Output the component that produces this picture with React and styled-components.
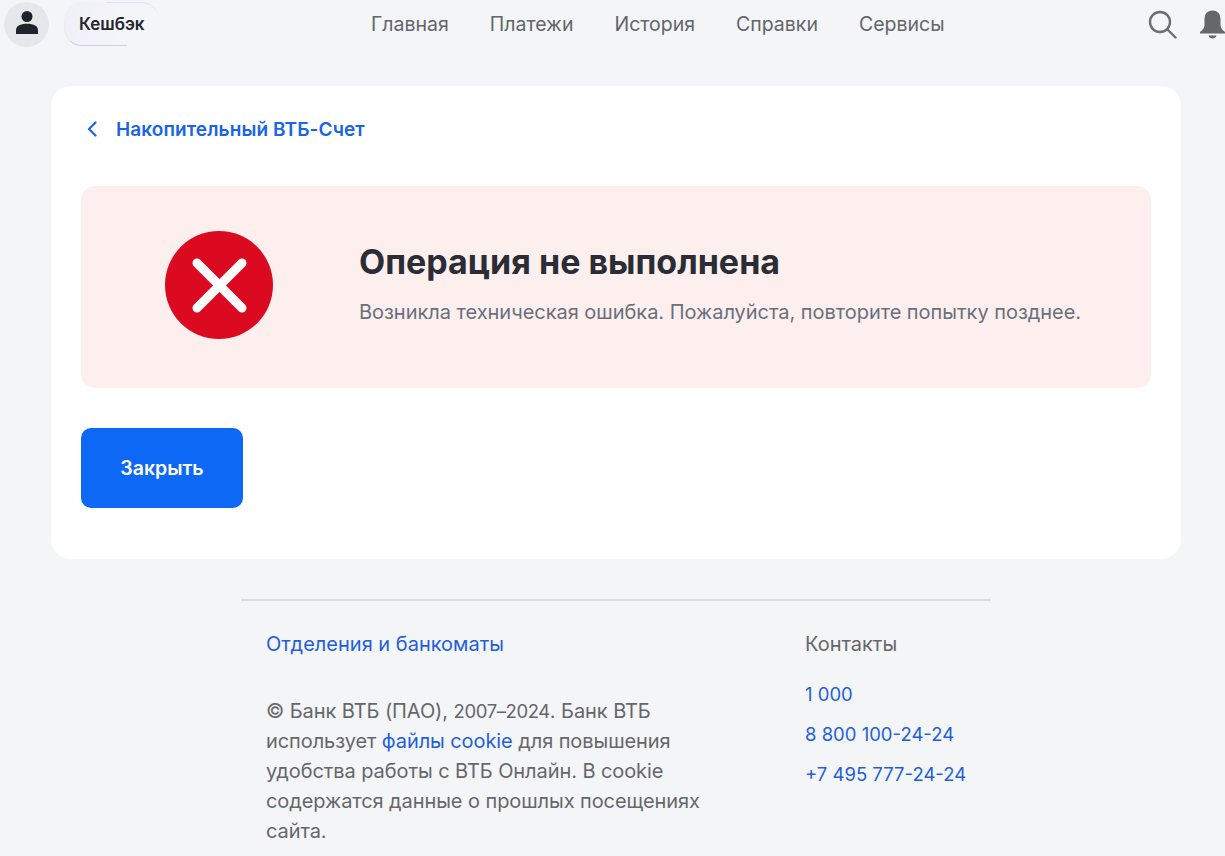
import React from 'react';
import styled, { createGlobalStyle } from 'styled-components';

const GlobalStyle = createGlobalStyle`
    html, body {
        margin: 0;
        padding: 0;
        height: 856px;
        overflow: hidden;
        background: #f4f5f7;
        font-family: "Inter", "Noto Sans", sans-serif;
    }
    * { box-sizing: border-box; }
`;

const Header = styled.header`
    height: 86px;
    padding: 2px 0 38px 4px;
    display: flex;
    align-items: flex-start;
`;

const Avatar = styled.div`
    width: 45px;
    height: 45px;
    padding-bottom: 4px;
    border-radius: 50%;
    background: #e6e7ea;
    display: flex;
    align-items: center;
    justify-content: center;
`;

const Cashback = styled.div`
    position: relative;
    margin-left: 15px;
    width: 95px;
    height: 44px;
    border-radius: 18px;
    display: flex;
    align-items: center;
    padding-left: 15px;
    font-size: 17px;
    font-weight: 600;
    color: #22262e;
    background: linear-gradient(100deg, #f0eff8 0%, #f4f5f8 60%, #f4f5f7 100%);

    &::before {
        content: '';
        position: absolute;
        left: 0;
        bottom: 0;
        width: 62px;
        height: 22px;
        border-bottom-left-radius: 18px;
        border-bottom: 1px solid #d6ccf2;
        border-left: 1px solid #ece9f7;
    }

    &::after {
        content: '';
        position: absolute;
        right: 0;
        top: 0;
        width: 52px;
        height: 18px;
        border-top-right-radius: 18px;
        border-top: 1px solid #e4def6;
    }
`;

const Nav = styled.nav`
    margin-left: 212px;
    height: 44px;
    display: flex;
    align-items: center;
    gap: 41px;
`;

const NavItem = styled.a`
    font-size: 19.5px;
    color: #62656b;
`;

const Tools = styled.div`
    margin-left: auto;
    display: flex;
    align-items: center;
    gap: 23px;
    height: 44px;
`;

const Card = styled.main`
    margin: 0 44px 0 51px;
    height: 473px;
    padding: 30px;
    background: #fff;
    border-radius: 20px;
`;

const Back = styled.a`
    height: 26px;
    display: flex;
    align-items: center;
    padding-left: 6px;
    gap: 18px;
    font-size: 19px;
    font-weight: 600;
    letter-spacing: 0.1px;
    color: #1a64e5;
`;

const ErrorPanel = styled.section`
    margin-top: 44px;
    height: 202px;
    border-radius: 14px;
    background: #feefef;
    display: flex;
    align-items: center;
    padding-left: 84px;
`;

const ErrorIcon = styled.div`
    width: 108px;
    height: 108px;
    border-radius: 50%;
    background: #dc0a20;
    display: flex;
    align-items: center;
    justify-content: center;
    flex: none;
    margin-top: -5px;
`;

const ErrorBody = styled.div`
    margin-left: 86px;
    margin-top: -8px;
`;

const Title = styled.h1`
    margin: 0;
    font-size: 34px;
    line-height: 40px;
    font-weight: 700;
    color: #2a2d35;
`;

const Message = styled.p`
    margin: 17px 0 0;
    font-size: 20px;
    line-height: 26px;
    letter-spacing: -0.03px;
    color: #69707d;
`;

const CloseButton = styled.button`
    margin-top: 40px;
    display: block;
    width: 162px;
    height: 80px;
    border: 0;
    border-radius: 10px;
    background: #0d69f5;
    color: #fff;
    font-family: inherit;
    font-size: 19.5px;
    font-weight: 600;
`;

const Footer = styled.footer`
    margin: 40px 0 0 241px;
    width: 750px;
    border-top: 2px solid #dcdde0;
    padding: 28px 25px 0;
    display: flex;
    font-size: 20px;
    line-height: 30px;
    color: #65676c;
`;

const About = styled.div`
    width: 539px;
    flex: none;
`;

const Legal = styled.p`
    margin: 37px 0 0;
    width: 440px;
    letter-spacing: -0.08px;
`;

const Digits = styled.span`
    font-size: 18.5px;
    letter-spacing: -0.4px;
`;

const Link = styled.a`
    color: #1f5fdc;
`;

const Contacts = styled.div`
    display: flex;
    flex-direction: column;
    white-space: nowrap;
`;

const Phone = styled(Link)`
    margin-top: ${props => props.$first ? 20 : 10}px;
    font-size: 18.5px;
`;

const navItems = ['Главная', 'Платежи', 'История', 'Справки', 'Сервисы'];
const phones = ['1 000', '8 800 100-24-24', '+7 495 777-24-24'];

export default function App() {
    return (
        <>
            <GlobalStyle />
            <Header>
                <Avatar>
                    <svg width="22" height="23" viewBox="0 0 22 23" fill="#1f232b">
                        <circle cx="11" cy="5.500" r="5.500" />
                        <path d="M0 23v-3.500C0 15 4 12.800 11 12.800s11 2.200 11 6.700V23z" />
                    </svg>
                </Avatar>
                <Cashback>Кешбэк</Cashback>
                <Nav>
                    {navItems.map(item => <NavItem key={item}>{item}</NavItem>)}
                </Nav>
                <Tools>
                    <svg width="29" height="29" viewBox="0 0 29 29" fill="none" stroke="#6d6e72" strokeWidth="2.400" strokeLinecap="round">
                        <circle cx="12" cy="12" r="10" />
                        <path d="M19.500 19.500l8 8" />
                    </svg>
                    <svg width="25" height="29" viewBox="0 0 25 29" fill="#66676b">
                        <path d="M12.500.5C18 .5 20.500 4 20.500 10v5c0 3 2 5 4.500 7v1.500H0V22c2.500-2 4.500-4 4.500-7v-5C4.500 4 7 .5 12.500.5z" />
                        <path d="M8.500 25.500h8c-.5 2-2 3-4 3s-3.500-1-4-3z" />
                    </svg>
                </Tools>
            </Header>
            <Card>
                <Back>
                    <svg width="11" height="16" viewBox="0 0 11 16" fill="none" stroke="#1a64e5" strokeWidth="2.200" strokeLinecap="round" strokeLinejoin="round">
                        <path d="M8.500 1.500L2 8l6.500 6.500" />
                    </svg>
                    Накопительный ВТБ-Счет
                </Back>
                <ErrorPanel>
                    <ErrorIcon>
                        <svg width="108" height="108" viewBox="0 0 108 108" fill="none" stroke="#fff" strokeWidth="9" strokeLinecap="round">
                            <path d="M32 32l45 45M77 32L32 77" />
                        </svg>
                    </ErrorIcon>
                    <ErrorBody>
                        <Title>Операция не выполнена</Title>
                        <Message>Возникла техническая ошибка. Пожалуйста, повторите попытку позднее.</Message>
                    </ErrorBody>
                </ErrorPanel>
                <CloseButton>Закрыть</CloseButton>
            </Card>
            <Footer>
                <About>
                    <Link>Отделения и банкоматы</Link>
                    <Legal>
                        © Банк ВТБ (ПАО), <Digits>2007–2024</Digits>. Банк ВТБ использует <Link>файлы cookie</Link> для повышения удобства работы с ВТБ Онлайн. В cookie содержатся данные о прошлых посещениях сайта.
                    </Legal>
                </About>
                <Contacts>
                    <span>Контакты</span>
                    {phones.map((phone, i) => <Phone key={phone} $first={i === 0}>{phone}</Phone>)}
                </Contacts>
            </Footer>
        </>
    );
}
